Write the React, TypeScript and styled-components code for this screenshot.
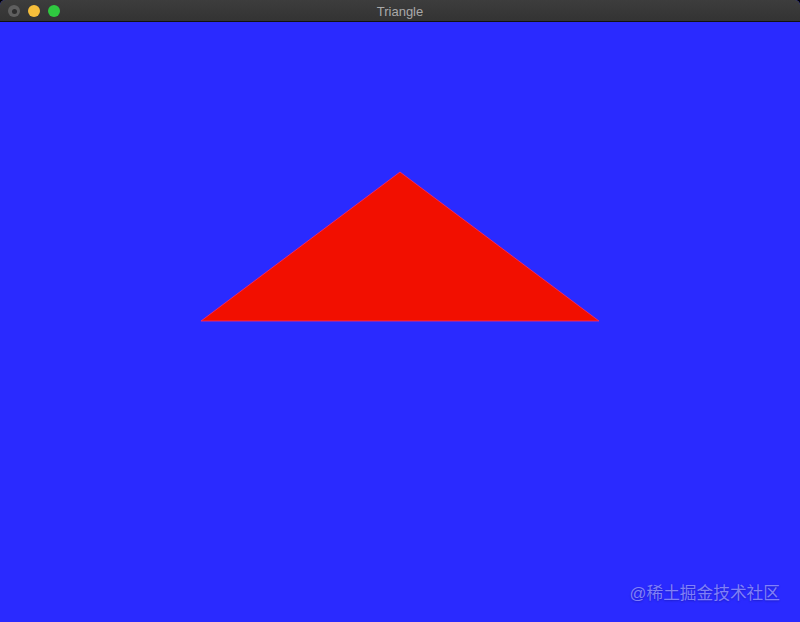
import styled, { createGlobalStyle } from "styled-components";

const GlobalStyle = createGlobalStyle`
  html, body {
    margin: 0;
    padding: 0;
    background: #000;
  }
`;

const App = () => {
  return (
    <Window>
      <GlobalStyle />
      <TitleBar>
        <Lights>
          <Light color="#5f5f5f">
            <Dot />
          </Light>
          <Light color="#f6be3b" />
          <Light color="#2fc840" />
        </Lights>
        <Title>Triangle</Title>
      </TitleBar>
      <Canvas>
        <svg width="800" height="600" viewBox="0 0 800 600">
          <polygon
            points="201,299 599,299 400,150"
            fill="#f20f00"
            stroke="#ff2a6a"
            strokeWidth="0.8"
          />
        </svg>
        <Watermark>@稀土掘金技术社区</Watermark>
      </Canvas>
    </Window>
  );
};

export default App;

const Window = styled.div`
  width: 800px;
  height: 622px;
  display: flex;
  flex-direction: column;
  overflow: hidden;
  border-radius: 5px 5px 0 0;
  background: #2a2aff;
`;

const TitleBar = styled.div`
  height: 21px;
  position: relative;
  display: flex;
  align-items: center;
  justify-content: center;
  background: linear-gradient(#3d3d3d, #333333);
  border-bottom: 1px solid #111;
  flex-shrink: 0;
`;

const Lights = styled.div`
  position: absolute;
  left: 8px;
  top: 5px;
  display: flex;
  gap: 8px;
`;

const Light = styled.div<{ color: string }>`
  width: 12px;
  height: 12px;
  border-radius: 50%;
  background: ${(p) => p.color};
  display: flex;
  align-items: center;
  justify-content: center;
`;

const Dot = styled.div`
  width: 5px;
  height: 5px;
  border-radius: 50%;
  background: #2c2c2c;
`;

const Title = styled.span`
  font-family: "Liberation Sans", Arial, sans-serif;
  font-size: 13px;
  color: #a9a9a9;
  padding-top: 2px;
`;

const Canvas = styled.div`
  position: relative;
  flex: 1;
  background: #2a2aff;

  svg {
    display: block;
  }
`;

const Watermark = styled.div`
  position: absolute;
  right: 20px;
  bottom: 18px;
  font-family: "Liberation Sans", "Noto Sans CJK SC", sans-serif;
  font-size: 16.7px;
  color: rgba(170, 170, 255, 0.7);
  text-shadow: 0 1px 2px rgba(0, 0, 80, 0.3);
`;
